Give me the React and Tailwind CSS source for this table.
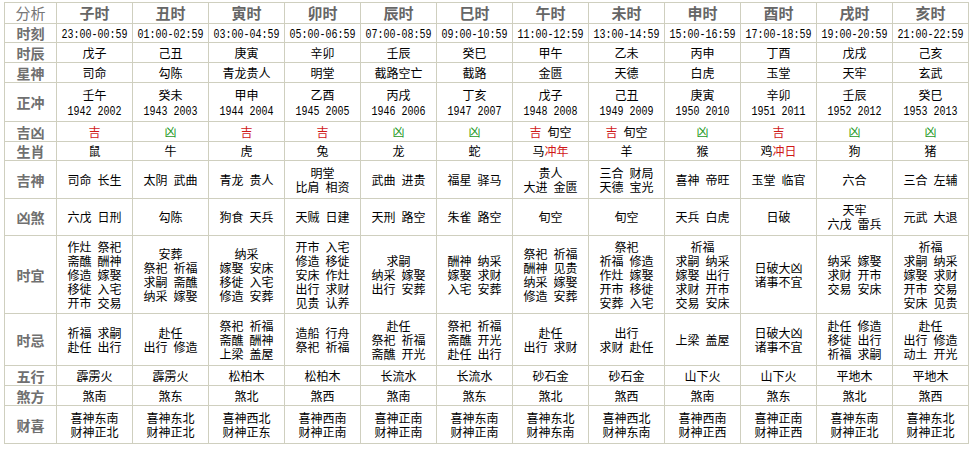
const HOURS = ["子时", "丑时", "寅时", "卯时", "辰时", "巳时", "午时", "未时", "申时", "酉时", "戌时", "亥时"];

const TIMES = [
  "23:00-00:59", "01:00-02:59", "03:00-04:59", "05:00-06:59", "07:00-08:59", "09:00-10:59",
  "11:00-12:59", "13:00-14:59", "15:00-16:59", "17:00-18:59", "19:00-20:59", "21:00-22:59",
];

const Ji = () => <span className="text-[#d01818]">吉</span>;
const Xiong = () => <span className="text-[#1f9a1f]">凶</span>;
const Red = ({ children }) => <span className="text-[#d01818]">{children}</span>;
const Gap = () => <span className="inline-block w-[6px]" />;

// Latin text in the page is a 6px-per-char bitmap font, fake it with a stretched mono
const Mono = ({ children }) => (
  <span className="inline-block font-['Liberation_Mono',monospace] text-[10px] leading-[12px] scale-y-[1.25]">{children}</span>
);

// "/" splits lines inside a cell, "#" marks a number line
const ROWS = [
  { label: "时辰", h: "h-[20px]", cells: ["戊子", "己丑", "庚寅", "辛卯", "壬辰", "癸巳", "甲午", "乙未", "丙申", "丁酉", "戊戌", "己亥"] },
  { label: "星神", h: "h-[20px]", cells: ["司命", "勾陈", "青龙贵人", "明堂", "截路空亡", "截路", "金匮", "天德", "白虎", "玉堂", "天牢", "玄武"] },
  {
    label: "正冲", h: "h-[39px]",
    cells: [
      "壬午/#1942 2002", "癸未/#1943 2003", "甲申/#1944 2004", "乙酉/#1945 2005", "丙戌/#1946 2006", "丁亥/#1947 2007",
      "戊子/#1948 2008", "己丑/#1949 2009", "庚寅/#1950 2010", "辛卯/#1951 2011", "壬辰/#1952 2012", "癸巳/#1953 2013",
    ],
  },
  {
    label: "吉凶", h: "h-[20px]",
    cells: [
      <Ji />, <Xiong />, <Ji />, <Ji />, <Xiong />, <Xiong />,
      <><Ji /><Gap />旬空</>, <><Ji /><Gap />旬空</>, <Xiong />, <Ji />, <Xiong />, <Xiong />,
    ],
  },
  {
    label: "生肖", h: "h-[19px]",
    cells: ["鼠", "牛", "虎", "兔", "龙", "蛇", <>马<Red>冲年</Red></>, "羊", "猴", <>鸡<Red>冲日</Red></>, "狗", "猪"],
  },
  {
    label: "吉神", h: "h-[38px]",
    cells: ["司命 长生", "太阴 武曲", "青龙 贵人", "明堂/比肩 相资", "武曲 进贵", "福星 驿马", "贵人/大进 金匮", "三合 财局/天德 宝光", "喜神 帝旺", "玉堂 临官", "六合", "三合 左辅"],
  },
  {
    label: "凶煞", h: "h-[37px]",
    cells: ["六戊 日刑", "勾陈", "狗食 天兵", "天贼 日建", "天刑 路空", "朱雀 路空", "旬空", "旬空", "天兵 白虎", "日破", "天牢/六戊 雷兵", "元武 大退"],
  },
  {
    label: "时宜", h: "h-[78px]",
    cells: [
      "作灶 祭祀/斋醮 酬神/修造 嫁娶/移徙 入宅/开市 交易",
      "安葬/祭祀 祈福/求嗣 斋醮/纳采 嫁娶",
      "纳采/嫁娶 安床/移徙 入宅/修造 安葬",
      "开市 入宅/修造 移徙/安床 作灶/出行 求财/见贵 认养",
      "求嗣/纳采 嫁娶/出行 安葬",
      "酬神 纳采/嫁娶 求财/入宅 安葬",
      "祭祀 祈福/酬神 见贵/纳采 嫁娶/修造 安葬",
      "祭祀/祈福 修造/作灶 嫁娶/开市 移徙/安葬 入宅",
      "祈福/求嗣 纳采/嫁娶 出行/求财 开市/交易 安床",
      "日破大凶/诸事不宜",
      "纳采 嫁娶/求财 开市/交易 安床",
      "祈福/求嗣 纳采/嫁娶 求财/开市 交易/安床 见贵",
    ],
  },
  {
    label: "时忌", h: "h-[52px]",
    cells: [
      "祈福 求嗣/赴任 出行",
      "赴任/出行 修造",
      "祭祀 祈福/斋醮 酬神/上梁 盖屋",
      "造船 行舟/祭祀 祈福",
      "赴任/祭祀 祈福/斋醮 开光",
      "祭祀 祈福/斋醮 开光/赴任 出行",
      "赴任/出行 求财",
      "出行/求财 赴任",
      "上梁 盖屋",
      "日破大凶/诸事不宜",
      "赴任 修造/移徙 出行/祈福 求嗣",
      "赴任/出行 修造/动土 开光",
    ],
  },
  { label: "五行", h: "h-[20px]", cells: ["霹雳火", "霹雳火", "松柏木", "松柏木", "长流水", "长流水", "砂石金", "砂石金", "山下火", "山下火", "平地木", "平地木"] },
  { label: "煞方", h: "h-[20px]", cells: ["煞南", "煞东", "煞北", "煞西", "煞南", "煞东", "煞北", "煞西", "煞南", "煞东", "煞北", "煞西"] },
  {
    label: "财喜", h: "h-[38px]",
    cells: [
      "喜神东南/财神正北", "喜神东北/财神正北", "喜神西北/财神正东", "喜神西南/财神正南", "喜神正南/财神正南", "喜神东南/财神正南",
      "喜神东北/财神东南", "喜神西北/财神东南", "喜神西南/财神正西", "喜神正南/财神正西", "喜神东南/财神正北", "喜神东北/财神正北",
    ],
  },
];

function Line({ text }) {
  if (text.startsWith("#")) {
    return (
      <div className="h-[14px]">
        <Mono>{text.slice(1)}</Mono>
      </div>
    );
  }
  const parts = text.split(" ");
  return (
    <div className="h-[14px] whitespace-nowrap">
      {parts.map((p, i) => (
        <span key={i}>
          {i > 0 && <Gap />}
          {p}
        </span>
      ))}
    </div>
  );
}

function CellBody({ value }) {
  if (typeof value !== "string") return value;
  return value.split("/").map((line, i) => <Line key={i} text={line} />);
}

const bd = "border border-[#cfcfbf]";
const labelCls = `${bd} text-center text-[14px] leading-[14px] font-bold text-[#707070]`;

export default function App() {
  return (
    <div className="bg-white w-[972px] h-[450px] pt-[2px] pl-[4px] font-['Noto_Sans_CJK_SC',sans-serif]">
      <table className="table-fixed w-[964px] border-collapse text-[12px] leading-[14px] text-black">
        <colgroup>
          <col className="w-[52px]" />
          {HOURS.map((h) => (
            <col key={h} className="w-[76px]" />
          ))}
        </colgroup>
        <tbody>
          <tr className="h-[21px]">
            <td className={`${bd} text-center text-[15px] leading-[16px] text-[#777]`}>分析</td>
            {HOURS.map((h) => (
              <td key={h} className={`${bd} text-center text-[15px] leading-[16px] font-bold text-[#666]`}>{h}</td>
            ))}
          </tr>
          <tr className="h-[19px]">
            <td className={labelCls}>时刻</td>
            {TIMES.map((t) => (
              <td key={t} className={`${bd} text-center`}>
                <Mono>{t}</Mono>
              </td>
            ))}
          </tr>
          {ROWS.map((row) => (
            <tr key={row.label} className={row.h}>
              <td className={labelCls}>{row.label}</td>
              {row.cells.map((c, i) => (
                <td key={i} className={`${bd} text-center align-middle`}>
                  <CellBody value={c} />
                </td>
              ))}
            </tr>
          ))}
        </tbody>
      </table>
    </div>
  );
}
